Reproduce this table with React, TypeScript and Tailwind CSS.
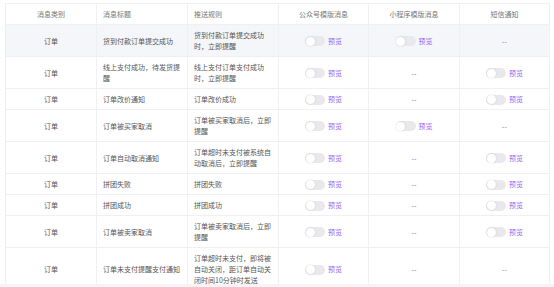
type Cell = 'toggle' | 'none';

type Row = {
  type: string;
  title: string;
  rule: string;
  mp: Cell;
  mini: Cell;
  sms: Cell;
  highlight?: boolean;
};

const rows: Row[] = [
  { type: '订单', title: '货到付款订单提交成功', rule: '货到付款订单提交成功时，立即提醒', mp: 'toggle', mini: 'toggle', sms: 'none', highlight: true },
  { type: '订单', title: '线上支付成功，待发货提醒', rule: '线上支付订单支付成功时，立即提醒', mp: 'toggle', mini: 'none', sms: 'toggle' },
  { type: '订单', title: '订单改价通知', rule: '订单改价成功', mp: 'toggle', mini: 'none', sms: 'toggle' },
  { type: '订单', title: '订单被买家取消', rule: '订单被买家取消后，立即提醒', mp: 'toggle', mini: 'toggle', sms: 'none' },
  { type: '订单', title: '订单自动取消通知', rule: '订单超时未支付被系统自动取消后，立即提醒', mp: 'toggle', mini: 'none', sms: 'toggle' },
  { type: '订单', title: '拼团失败', rule: '拼团失败', mp: 'toggle', mini: 'none', sms: 'toggle' },
  { type: '订单', title: '拼团成功', rule: '拼团成功', mp: 'toggle', mini: 'none', sms: 'toggle' },
  { type: '订单', title: '订单被卖家取消', rule: '订单被卖家取消后，立即提醒', mp: 'toggle', mini: 'none', sms: 'toggle' },
  { type: '订单', title: '订单未支付提醒支付通知', rule: '订单超时未支付，即将被自动关闭，距订单自动关闭时间10分钟时发送', mp: 'toggle', mini: 'none', sms: 'none' },
];

const Switch = () => (
  <span className="relative inline-block w-[20px] h-[10px] rounded-full bg-[#e9e9ed]">
    <span className="absolute left-[0.5px] top-[0.5px] w-[9px] h-[9px] rounded-full bg-white shadow-[0_0_2px_rgba(0,0,0,0.15)]" />
  </span>
);

const Channel = ({ value }: { value: Cell }) =>
  value === 'toggle' ? (
    <div className="flex items-center justify-center gap-[3px]">
      <Switch />
      <span className="text-[#9466f3]">预览</span>
    </div>
  ) : (
    <div className="text-center text-[#9466f3]">--</div>
  );

export default function App() {
  const td = 'border border-[#eef0f4] px-[6px] pt-[5px] pb-[4px] align-middle';
  return (
    <div
      className="w-[554px] h-[287px] bg-white overflow-hidden flex flex-col text-[7px] leading-[11px] text-[#555]"
      style={{ fontFamily: '"Noto Sans CJK SC", "Noto Sans", sans-serif' }}
    >
      <div className="flex-1 overflow-hidden pt-[3px] pl-[5px]">
        <table className="table-fixed border-collapse w-[544px]">
          <colgroup>
            <col className="w-[91px]" />
            <col className="w-[91px]" />
            <col className="w-[91px]" />
            <col className="w-[90px]" />
            <col className="w-[91px]" />
            <col className="w-[90px]" />
          </colgroup>
          <thead>
            <tr className="text-[#777]">
              <th className={`${td} font-normal text-center`}>消息类别</th>
              <th className={`${td} font-normal text-left`}>消息标题</th>
              <th className={`${td} font-normal text-left`}>推送规则</th>
              <th className={`${td} font-normal text-center`}>公众号模版消息</th>
              <th className={`${td} font-normal text-center`}>小程序模版消息</th>
              <th className={`${td} font-normal text-center`}>短信通知</th>
            </tr>
          </thead>
          <tbody>
            {rows.map((r, i) => (
              <tr key={i} className={r.highlight ? 'bg-[#f4f6fa]' : ''}>
                <td className={`${td} text-center`}>{r.type}</td>
                <td className={td}>{r.title}</td>
                <td className={td}>{r.rule}</td>
                <td className={td}>
                  <Channel value={r.mp} />
                </td>
                <td className={td}>
                  <Channel value={r.mini} />
                </td>
                <td className={td}>
                  <Channel value={r.sms} />
                </td>
              </tr>
            ))}
          </tbody>
        </table>
      </div>
      <div className="h-[3px] bg-[#f5f5f7]" />
    </div>
  );
}
